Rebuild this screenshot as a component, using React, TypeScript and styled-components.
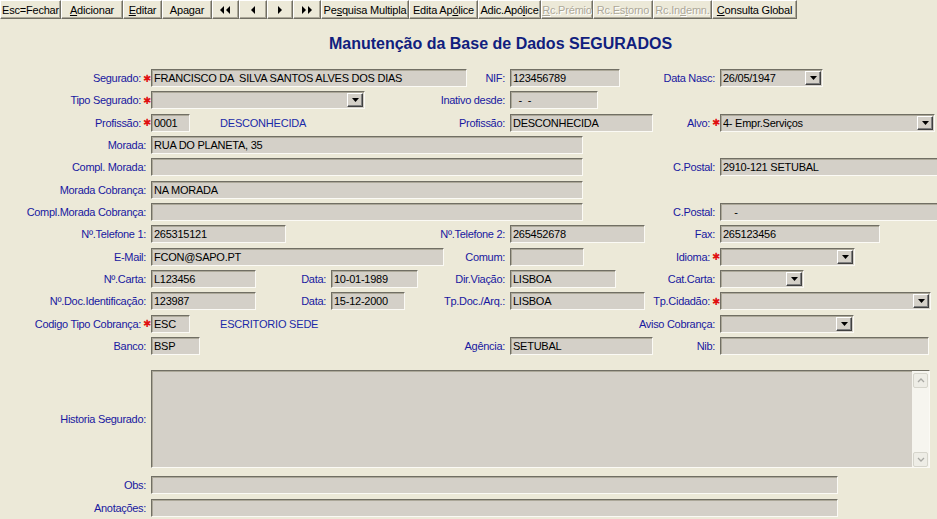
import React from 'react';
import styled, { createGlobalStyle } from 'styled-components';

const GlobalStyle = createGlobalStyle`
  html, body {
    margin: 0;
    padding: 0;
    background: #ece9d8;
    overflow: hidden;
  }
  body {
    font-family: "Liberation Sans", Arial, sans-serif;
    font-size: 11px;
  }
`;

const Page = styled.div`
  width: 937px;
  height: 519px;
  overflow: hidden;
  background: #ece9d8;
`;

const Toolbar = styled.div`
  display: flex;
  height: 19px;
`;

const ToolButton = styled.div<{ $w: number; $disabled?: boolean }>`
  width: ${(p) => p.$w}px;
  height: 19px;
  box-sizing: border-box;
  flex: none;
  display: flex;
  align-items: center;
  justify-content: center;
  overflow: hidden;
  border-top: 1px solid #ffffff;
  border-left: 1px solid #ffffff;
  border-right: 1px solid #716f64;
  border-bottom: 1px solid #716f64;
  box-shadow: inset -1px -1px 0 #aca899;
  color: ${(p) => (p.$disabled ? '#aca899' : '#000')};
  text-shadow: ${(p) => (p.$disabled ? '1px 1px 0 #fff' : 'none')};
  white-space: nowrap;
  font-size: 11px;
  letter-spacing: -0.2px;
`;

const Key = styled.span`
  text-decoration: underline;
`;

const Title = styled.h1`
  margin: 0;
  padding: 15px 0 15px 64px;
  height: 20px;
  line-height: 20px;
  text-align: center;
  font-family: "Liberation Sans", Arial, sans-serif;
  font-size: 16px;
  font-weight: bold;
  color: #10207e;
`;

const Form = styled.div`
  display: flex;
  flex-direction: column;
  gap: 4.33px;
`;

const Row = styled.div`
  display: flex;
  align-items: center;
  height: 18px;
`;

const Label = styled.div<{ $w: number; $req?: boolean }>`
  width: ${(p) => p.$w}px;
  flex: none;
  box-sizing: border-box;
  display: flex;
  justify-content: flex-end;
  align-items: center;
  padding-right: ${(p) => (p.$req ? 0 : 5)}px;
  color: #1818a0;
  white-space: nowrap;
  letter-spacing: -0.3px;
`;

const Star = styled.span`
  color: #e01010;
  font-family: "DejaVu Sans", sans-serif;
  font-size: 10px;
  width: 8px;
  margin-left: 2px;
  text-align: left;
`;

const Field = styled.div<{ $w: number; $h?: number }>`
  width: ${(p) => p.$w}px;
  height: ${(p) => p.$h ?? 18}px;
  flex: none;
  box-sizing: border-box;
  background: #d4d0c8;
  border-top: 1px solid #716f64;
  border-left: 1px solid #716f64;
  border-right: 1px solid #fbfaf5;
  border-bottom: 1px solid #fbfaf5;
  box-shadow: inset 1px 1px 0 #aca899;
  padding-left: 2px;
  line-height: 16px;
  color: #000;
  white-space: pre;
  overflow: hidden;
  letter-spacing: -0.25px;
`;

const Combo = styled(Field)`
  display: flex;
  align-items: center;
  padding-right: 1px;
`;

const ComboValue = styled.div`
  flex: 1;
  overflow: hidden;
  white-space: pre;
`;

const DropButton = styled.div`
  flex: none;
  width: 16px;
  height: 14px;
  box-sizing: border-box;
  display: flex;
  align-items: center;
  justify-content: center;
  background: #d4d0c8;
  border-top: 1px solid #ffffff;
  border-left: 1px solid #ffffff;
  border-right: 1px solid #404040;
  border-bottom: 1px solid #404040;
  box-shadow: inset -1px -1px 0 #808080;
`;

const Note = styled.div<{ $w: number }>`
  width: ${(p) => p.$w}px;
  flex: none;
  box-sizing: border-box;
  padding-left: 30px;
  color: #1a2aa8;
  white-space: nowrap;
  letter-spacing: -0.2px;
`;

const MemoRow = styled.div`
  display: flex;
  align-items: center;
  margin-top: 15px;
`;

const Memo = styled.div`
  width: 779px;
  height: 98px;
  box-sizing: border-box;
  display: flex;
  background: #d4d0c8;
  border-top: 1px solid #716f64;
  border-left: 1px solid #716f64;
  border-right: 1px solid #fbfaf5;
  border-bottom: 1px solid #fbfaf5;
  box-shadow: inset 1px 1px 0 #aca899;
`;

const MemoBody = styled.div`
  flex: 1;
`;

const ScrollBar = styled.div`
  width: 17px;
  flex: none;
  display: flex;
  flex-direction: column;
  justify-content: space-between;
  align-items: center;
  padding: 2px 0 0;
  background: #f6f5ef;
  box-sizing: border-box;
`;

const ScrollButton = styled.div`
  width: 15px;
  height: 15px;
  box-sizing: border-box;
  display: flex;
  align-items: center;
  justify-content: center;
  background: #eeede6;
  border: 1px solid #d6d5cc;
  border-radius: 2px;
`;

const BottomRows = styled.div`
  display: flex;
  flex-direction: column;
  gap: 5px;
  margin-top: 8px;
`;

const Arrow = () => (
  <svg width="7" height="4" viewBox="0 0 7 4">
    <path d="M0 0h7L3.5 4z" fill="#000" />
  </svg>
);

const NavIcon = ({ dir, double }: { dir: 'l' | 'r'; double?: boolean }) => {
  const tri = (x: number) =>
    dir === 'l' ? `M${x + 4} 0v8L${x} 4z` : `M${x} 0v8L${x + 4} 4z`;
  return (
    <svg width={double ? 11 : 5} height="8" viewBox={`0 0 ${double ? 11 : 5} 8`}>
      <path d={tri(0)} fill="#000" />
      {double && <path d={tri(6)} fill="#000" />}
    </svg>
  );
};

const Chevron = ({ up }: { up?: boolean }) => (
  <svg width="8" height="5" viewBox="0 0 8 5">
    <path
      d={up ? 'M1 4L4 1L7 4' : 'M1 1L4 4L7 1'}
      stroke="#a9a9a4"
      strokeWidth="1.3"
      fill="none"
    />
  </svg>
);

type Item =
  | { t: 'label'; w: number; text: string; req?: boolean }
  | { t: 'field'; w: number; value?: string }
  | { t: 'combo'; w: number; value?: string }
  | { t: 'note'; w: number; text: string };

const L = (w: number, text: string, req?: boolean): Item => ({ t: 'label', w, text, req });
const F = (w: number, value = ''): Item => ({ t: 'field', w, value });
const C = (w: number, value = ''): Item => ({ t: 'combo', w, value });
const N = (w: number, text: string): Item => ({ t: 'note', w, text });

const rows: Item[][] = [
  [L(151, 'Segurado:', true), F(316, 'FRANCISCO DA  SILVA SANTOS ALVES DOS DIAS'), L(43, 'NIF:'), F(110, '123456789'), L(100, 'Data Nasc:'), C(103, '26/05/1947')],
  [L(151, 'Tipo Segurado:', true), C(214), L(145, 'Inativo desde:'), F(88, '  -  -')],
  [L(151, 'Profissão:', true), F(39, '0001'), N(140, 'DESCONHECIDA'), L(180, 'Profissão:'), F(143, 'DESCONHECIDA'), L(67, 'Alvo:', true), C(215, '4- Empr.Serviços')],
  [L(151, 'Morada:'), F(432, 'RUA DO PLANETA, 35')],
  [L(151, 'Compl. Morada:'), F(432), L(137, 'C.Postal:'), F(230, '2910-121 SETUBAL')],
  [L(151, 'Morada Cobrança:'), F(432, 'NA MORADA')],
  [L(151, 'Compl.Morada Cobrança:'), F(432), L(137, 'C.Postal:'), F(230, '    -')],
  [L(151, 'Nº.Telefone 1:'), F(135, '265315121'), L(224, 'Nº.Telefone 2:'), F(135, '265452678'), L(75, 'Fax:'), F(160, '265123456')],
  [L(151, 'E-Mail:'), F(293, 'FCON@SAPO.PT'), L(66, 'Comum:'), F(74), L(136, 'Idioma:', true), C(135)],
  [L(151, 'Nº.Carta:'), F(105, 'L123456'), L(75, 'Data:'), F(87, '10-01-1989'), L(92, 'Dir.Viação:'), F(106, 'LISBOA'), L(104, 'Cat.Carta:'), C(84)],
  [L(151, 'Nº.Doc.Identificação:'), F(105, '123987'), L(75, 'Data:'), F(74, '15-12-2000'), L(105, 'Tp.Doc./Arq.:'), F(135, 'LISBOA'), L(75, 'Tp.Cidadão:', true), C(211)],
  [L(151, 'Codigo Tipo Cobrança:', true), F(39, 'ESC'), N(140, 'ESCRITORIO SEDE'), L(390, 'Aviso Cobrança:'), C(134)],
  [L(151, 'Banco:'), F(49, 'BSP'), L(310, 'Agência:'), F(143, 'SETUBAL'), L(67, 'Nib:'), F(209)],
];

const renderItem = (it: Item, i: number) => {
  switch (it.t) {
    case 'label':
      return (
        <Label key={i} $w={it.w} $req={it.req}>
          {it.text}
          {it.req && <Star>✱</Star>}
        </Label>
      );
    case 'field':
      return (
        <Field key={i} $w={it.w}>
          {it.value}
        </Field>
      );
    case 'combo':
      return (
        <Combo key={i} $w={it.w}>
          <ComboValue>{it.value}</ComboValue>
          <DropButton>
            <Arrow />
          </DropButton>
        </Combo>
      );
    case 'note':
      return (
        <Note key={i} $w={it.w}>
          {it.text}
        </Note>
      );
  }
};

const App = () => {
  return (
    <Page>
      <GlobalStyle />
      <Toolbar>
        <ToolButton $w={61}>Esc=Fechar</ToolButton>
        <ToolButton $w={62}><Key>A</Key>dicionar</ToolButton>
        <ToolButton $w={39}><Key>E</Key>ditar</ToolButton>
        <ToolButton $w={50}>Apa<Key>g</Key>ar</ToolButton>
        <ToolButton $w={27}><NavIcon dir="l" double /></ToolButton>
        <ToolButton $w={28}><NavIcon dir="l" /></ToolButton>
        <ToolButton $w={26}><NavIcon dir="r" /></ToolButton>
        <ToolButton $w={28}><NavIcon dir="r" double /></ToolButton>
        <ToolButton $w={88}>Pe<Key>s</Key>quisa Multipla</ToolButton>
        <ToolButton $w={69}>Edita Ap<Key>ó</Key>lice</ToolButton>
        <ToolButton $w={63}>Adic.Apó<Key>l</Key>ice</ToolButton>
        <ToolButton $w={52} $disabled><Key>R</Key>c.Prémio</ToolButton>
        <ToolButton $w={60} $disabled>Rc.Es<Key>t</Key>orno</ToolButton>
        <ToolButton $w={59} $disabled>Rc.In<Key>d</Key>emn.</ToolButton>
        <ToolButton $w={85}><Key>C</Key>onsulta Global</ToolButton>
      </Toolbar>
      <Title>Manutenção da Base de Dados SEGURADOS</Title>
      <Form>
        {rows.map((r, i) => (
          <Row key={i}>{r.map(renderItem)}</Row>
        ))}
      </Form>
      <MemoRow>
        <Label $w={151}>Historia Segurado:</Label>
        <Memo>
          <MemoBody />
          <ScrollBar>
            <ScrollButton>
              <Chevron up />
            </ScrollButton>
            <ScrollButton>
              <Chevron />
            </ScrollButton>
          </ScrollBar>
        </Memo>
      </MemoRow>
      <BottomRows>
        <Row>
          <Label $w={151}>Obs:</Label>
          <Field $w={687} />
        </Row>
        <Row>
          <Label $w={151}>Anotações:</Label>
          <Field $w={687} />
        </Row>
      </BottomRows>
    </Page>
  );
};

export default App;
